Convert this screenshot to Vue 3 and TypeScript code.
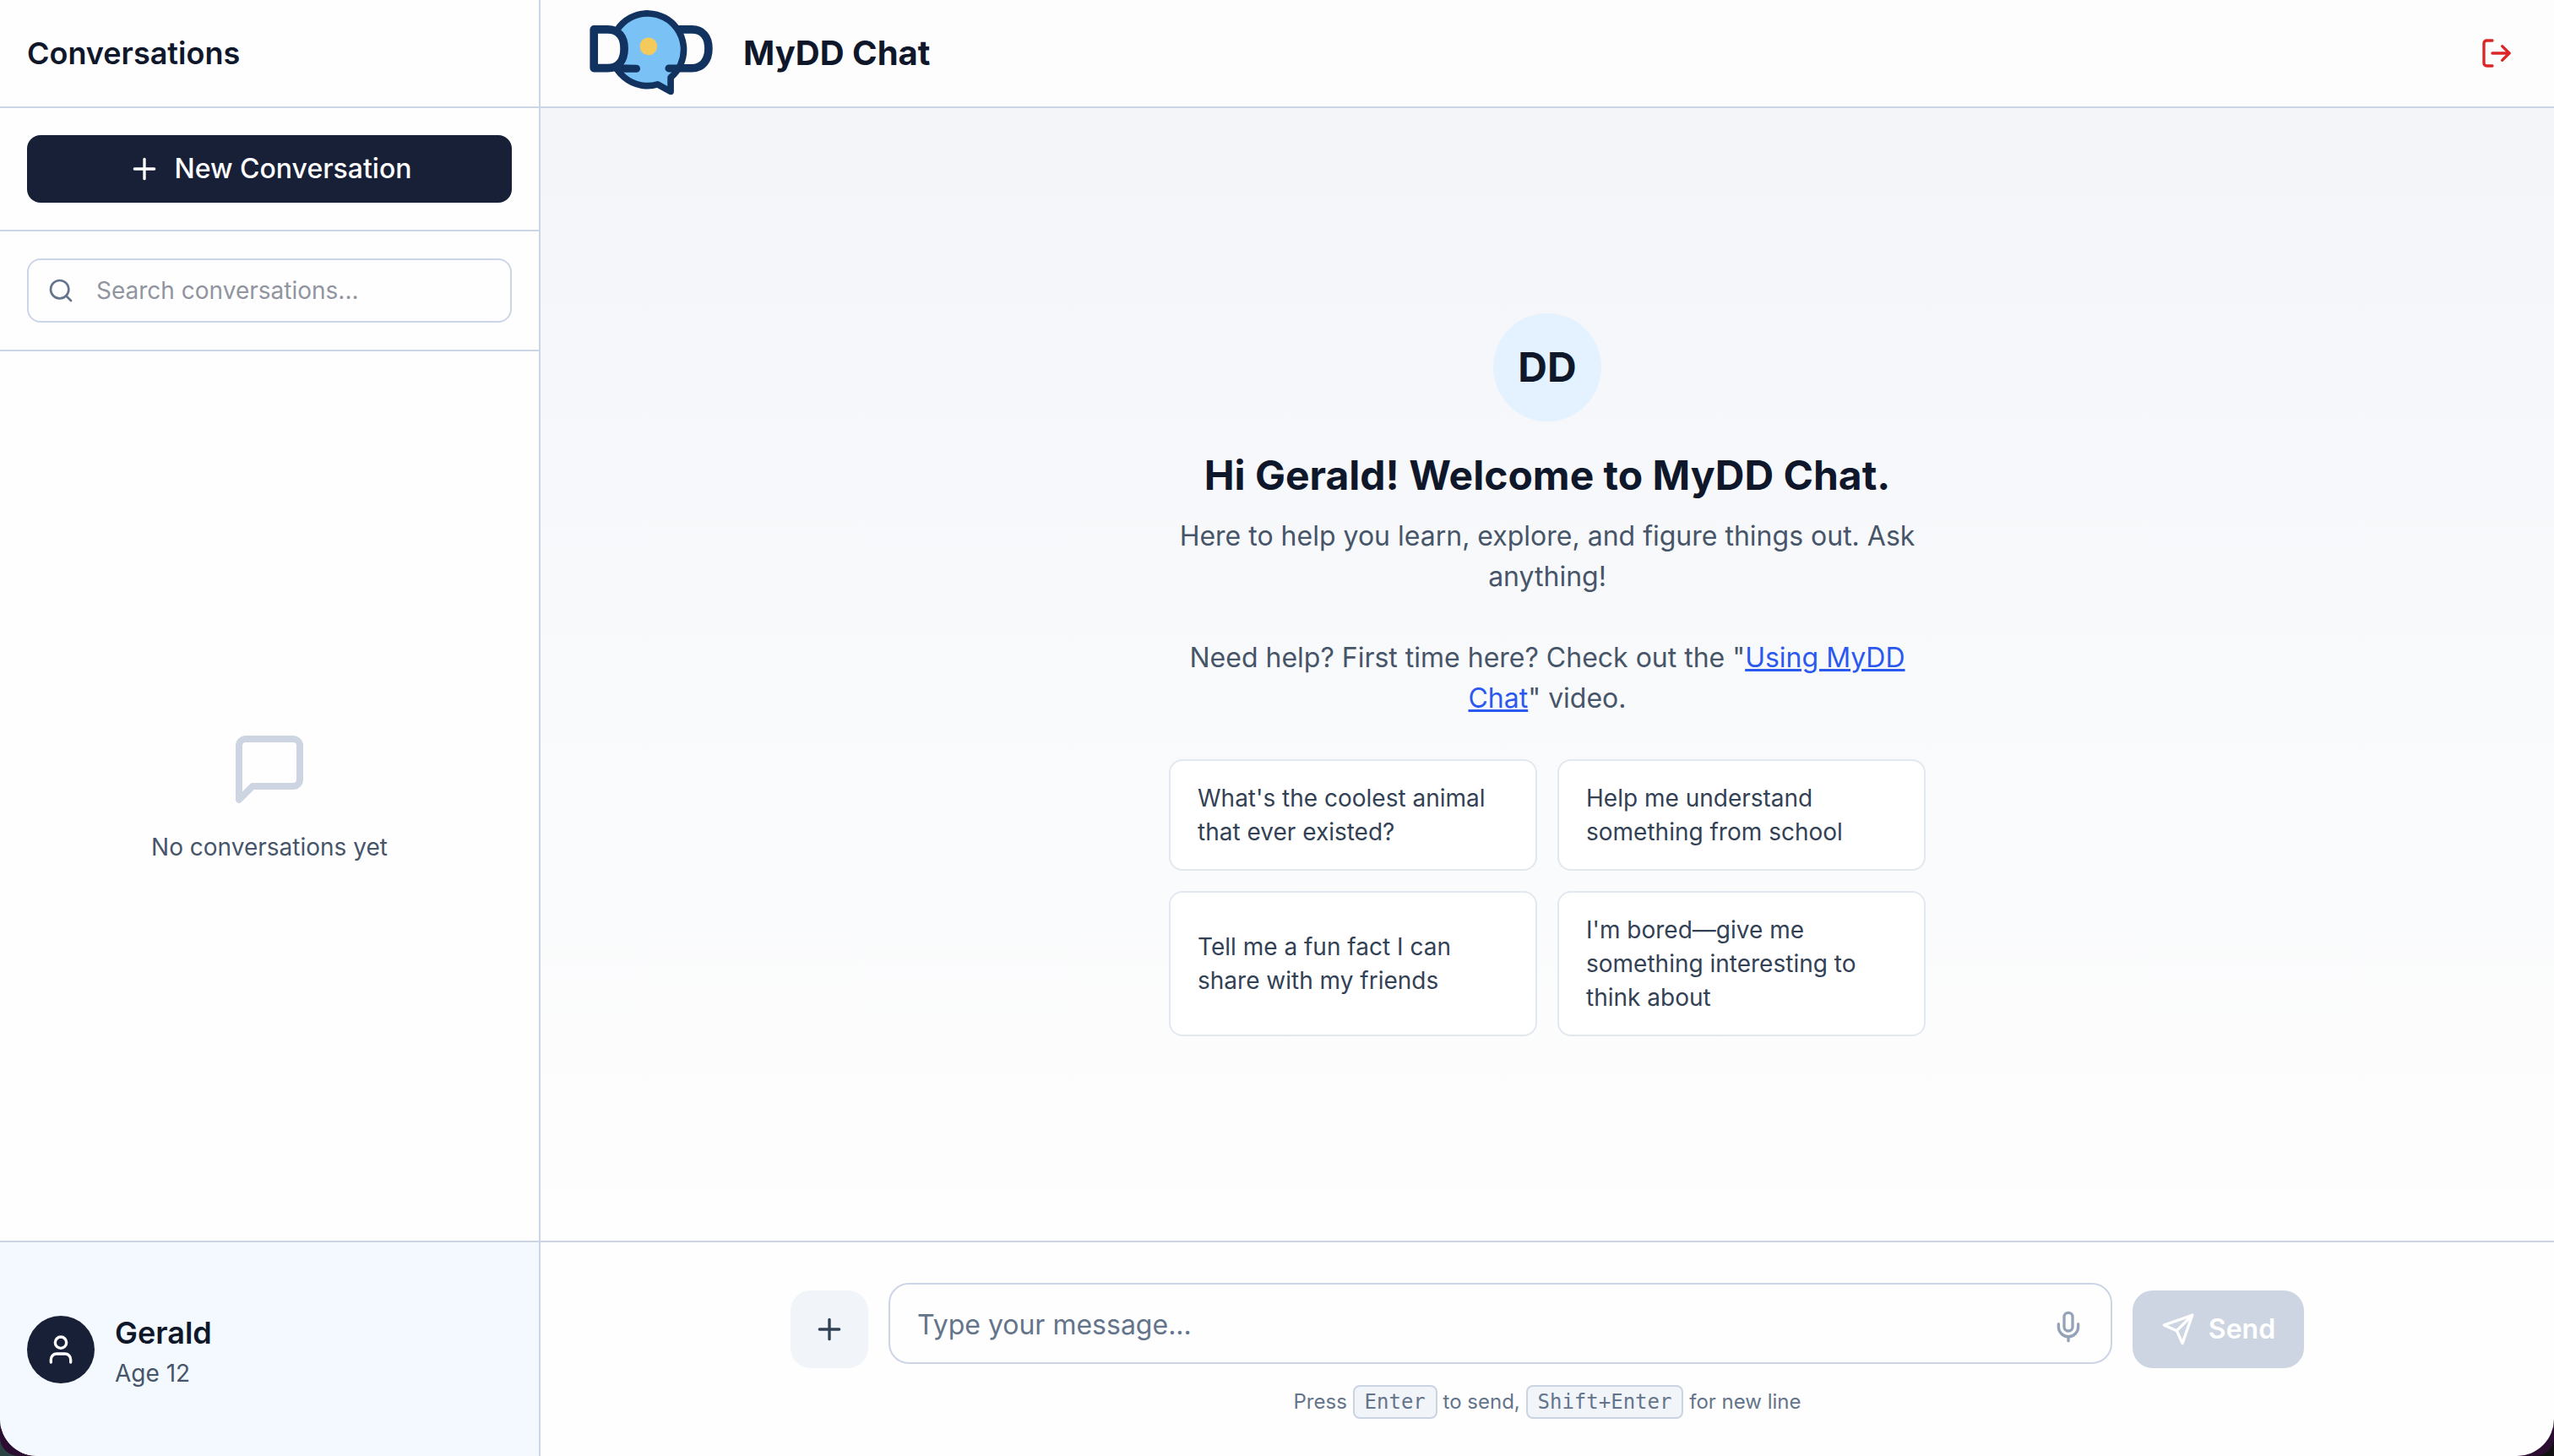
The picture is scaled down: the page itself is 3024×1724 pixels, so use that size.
<script setup lang="ts">
import { ref } from 'vue'

const suggestions: string[] = [
  "What's the coolest animal that ever existed?",
  'Help me understand something from school',
  'Tell me a fun fact I can share with my friends',
  "I'm bored—give me something interesting to think about",
]
const search = ref<string>('')
const message = ref<string>('')
</script>

<template>
  <div class="screen">
    <div class="frame">
    <div class="window">
      <aside class="sidebar">
        <header class="side-head"><h2>Conversations</h2></header>
        <div class="side-block">
          <button class="new-btn">
            <svg class="i40" viewBox="0 0 24 24"><path d="M5 12h14M12 5v14" /></svg>
            <span>New Conversation</span>
          </button>
        </div>
        <div class="side-block">
          <label class="search">
            <svg class="i32" viewBox="0 0 24 24"><circle cx="11" cy="11" r="8" /><path d="m21 21-4.3-4.3" /></svg>
            <input v-model="search" type="text" placeholder="Search conversations..." />
          </label>
        </div>
        <div class="empty">
          <svg class="i96" viewBox="0 0 24 24"><path d="M21 15a2 2 0 0 1-2 2H7l-4 4V5a2 2 0 0 1 2-2h14a2 2 0 0 1 2 2z" /></svg>
          <p>No conversations yet</p>
        </div>
        <footer class="profile">
          <div class="avatar">
            <svg class="i40" viewBox="0 0 24 24"><path d="M19 21v-2a4 4 0 0 0-4-4H9a4 4 0 0 0-4 4v2" /><circle cx="12" cy="7" r="4" /></svg>
          </div>
          <div>
            <div class="name">Gerald</div>
            <div class="age">Age 12</div>
          </div>
        </footer>
      </aside>

      <div class="main">
        <header class="top">
          <div class="brand">
            <svg class="logo" viewBox="174 36 438 304">
              <path class="navy" stroke-width="29" d="M456 243H538C576 243 597.500 214 597.500 173C597.500 132 576 105 538 105H480" />
              <path class="bubble" stroke-width="23" d="M416 300.700A129 129 0 1 1 462.500 276V326.500Z" />
              <path class="navy" stroke-width="27" d="M456 243.500H486" />
              <path class="navy" stroke-width="27" d="M268 243Q300 244.500 340.500 244.500" />
              <path class="letter" stroke-width="29" d="M189 105H238C277 105 297 132 297 173C297 214 277 242.500 238 242.500H189Z" />
              <circle cx="383.500" cy="165" r="31" fill="#f4cb5a" />
            </svg>
            <h1>MyDD Chat</h1>
          </div>
          <svg class="i40 logout" viewBox="0 0 24 24"><path d="M9 21H5a2 2 0 0 1-2-2V5a2 2 0 0 1 2-2h4" /><path d="m16 17 5-5-5-5" /><path d="M21 12H9" /></svg>
        </header>

        <section class="welcome">
          <div class="content">
            <div class="badge">DD</div>
            <h2>Hi Gerald! Welcome to MyDD Chat.</h2>
            <p>
              Here to help you learn, explore, and figure things out. Ask anything!<br /><br />
              Need help? First time here? Check out the "<a>Using MyDD Chat</a>" video.
            </p>
            <div class="cards">
              <button v-for="s in suggestions" :key="s" class="card">{{ s }}</button>
            </div>
          </div>
        </section>

        <section class="composer">
          <div class="row">
            <button class="attach"><svg class="i40" viewBox="0 0 24 24"><path d="M5 12h14M12 5v14" /></svg></button>
            <label class="field">
              <input v-model="message" type="text" placeholder="Type your message..." />
              <svg class="i40 mic" viewBox="0 0 24 24"><path d="M12 19v3" /><path d="M19 10v2a7 7 0 0 1-14 0v-2" /><rect x="9" y="2" width="6" height="13" rx="3" /></svg>
            </label>
            <button class="send">
              <svg class="i40" viewBox="0 0 24 24"><path d="m22 2-7 20-4-9-9-4Z" /><path d="M22 2 11 13" /></svg>
              <span>Send</span>
            </button>
          </div>
          <p class="hint">Press <kbd>Enter</kbd> to send, <kbd>Shift+Enter</kbd> for new line</p>
        </section>
      </div>
    </div>
    </div>
  </div>
</template>

<style>
body {
  margin: 0;
}
</style>

<style scoped>
* {
  box-sizing: border-box;
}
h1,
h2,
p {
  margin: 0;
}
button,
input {
  font: inherit;
  border: 0;
  padding: 0;
  background: none;
  color: inherit;
}
svg {
  display: block;
  flex: none;
  fill: none;
  stroke: currentColor;
  stroke-width: 2;
  stroke-linecap: round;
  stroke-linejoin: round;
}
.i32 {
  width: 32px;
  height: 32px;
}
.i40 {
  width: 40px;
  height: 40px;
}
.i96 {
  width: 96px;
  height: 96px;
}
.screen {
  width: 3024px;
  height: 1724px;
  overflow: hidden;
  background: linear-gradient(to right, #2a4242 50%, #101010 50%);
  font-family: Inter, "Liberation Sans", sans-serif;
  color: #0f172a;
}
.frame {
  height: 100%;
  overflow: hidden;
  border-radius: 0 0 22px 22px;
  background: #2a0d30;
}
.window {
  display: flex;
  height: 100%;
  overflow: hidden;
  background: #fefefe;
  border-radius: 0 0 44px 44px;
}
.sidebar {
  display: flex;
  flex-direction: column;
  flex: none;
  width: 640px;
  border-right: 2px solid #cbd5e6;
}
.side-head {
  display: flex;
  align-items: center;
  height: 128px;
  padding: 0 32px;
  border-bottom: 2px solid #cbd5e6;
}
.side-head h2 {
  font-size: 36px;
  line-height: 56px;
  font-weight: 600;
}
.side-block {
  padding: 32px;
  border-bottom: 2px solid #cbd5e6;
}
.new-btn {
  display: flex;
  align-items: center;
  justify-content: center;
  gap: 16px;
  width: 100%;
  height: 80px;
  border-radius: 16px;
  background: #182037;
  color: #fff;
  font-size: 32px;
  font-weight: 500;
}
.new-btn span {
  padding-bottom: 2px;
}
.search {
  display: flex;
  align-items: center;
  gap: 26px;
  height: 76px;
  padding: 0 22px;
  border: 2px solid #cbd5e6;
  border-radius: 16px;
  color: #64748b;
}
.search input {
  flex: 1;
  min-width: 0;
  font-size: 28px;
  outline: none;
}
.search input::placeholder {
  color: #9095a0;
}
.empty {
  display: flex;
  flex: 1;
  flex-direction: column;
  align-items: center;
  justify-content: center;
  gap: 24px;
  color: #cdd5e2;
}
.empty p {
  font-size: 28px;
  line-height: 40px;
  color: #475569;
}
.profile {
  display: flex;
  align-items: center;
  gap: 24px;
  height: 255px;
  padding: 0 32px;
  border-top: 2px solid #cbd5e6;
  background: #f4f9ff;
}
.avatar {
  display: flex;
  align-items: center;
  justify-content: center;
  width: 80px;
  height: 80px;
  border-radius: 50%;
  background: #182037;
  color: #fff;
}
.name {
  font-size: 36px;
  line-height: 56px;
  font-weight: 600;
}
.age {
  font-size: 28px;
  line-height: 40px;
  color: #475569;
}
.main {
  display: flex;
  flex: 1;
  flex-direction: column;
  min-width: 0;
}
.top {
  display: flex;
  align-items: center;
  justify-content: space-between;
  height: 128px;
  padding: 0 48px 0 58px;
  border-bottom: 2px solid #cbd5e6;
  background: #fdfdfe;
}
.brand {
  display: flex;
  align-items: center;
  gap: 36px;
}
.logo {
  width: 146px;
  height: 101px;
  margin-bottom: 1px;
}
.navy {
  stroke: #12335f;
}
.bubble {
  stroke: #12335f;
  fill: #7ac2f5;
}
.letter {
  stroke: #12335f;
  fill: #fdfdfe;
}
.logo circle {
  stroke: none;
}
.brand h1 {
  font-size: 40px;
  line-height: 56px;
  font-weight: 700;
}
.logout {
  color: #dc2626;
}
.welcome {
  display: flex;
  flex: 1;
  align-items: center;
  justify-content: center;
  background: linear-gradient(to bottom, #f3f5f9, #fefefe);
}
.content {
  display: flex;
  flex-direction: column;
  align-items: center;
  width: 896px;
  text-align: center;
}
.badge {
  display: flex;
  align-items: center;
  justify-content: center;
  width: 128px;
  height: 128px;
  margin-bottom: 32px;
  border-radius: 50%;
  background: #e3f2fe;
  font-size: 48px;
  font-weight: 700;
}
.content h2 {
  margin-bottom: 16px;
  font-size: 48px;
  line-height: 64px;
  font-weight: 700;
  white-space: nowrap;
}
.content p {
  margin-bottom: 48px;
  font-size: 32px;
  line-height: 48px;
  color: #475569;
}
.content a {
  color: #2b59f0;
  text-decoration: underline;
}
.cards {
  display: grid;
  grid-template-columns: 1fr 1fr;
  gap: 24px;
  width: 100%;
}
.card {
  padding: 24px 32px;
  border: 2px solid #e2e8f0;
  border-radius: 16px;
  background: #fff;
  color: #334155;
  font-size: 28px;
  line-height: 40px;
  text-align: left;
}
.composer {
  display: flex;
  flex-direction: column;
  align-items: center;
  height: 255px;
  padding-top: 48px;
  border-top: 2px solid #cbd5e6;
}
.row {
  display: flex;
  align-items: flex-end;
  gap: 24px;
  width: 1792px;
  height: 101px;
}
.attach {
  display: flex;
  flex: none;
  align-items: center;
  justify-content: center;
  width: 92px;
  height: 92px;
  border-radius: 24px;
  background: #f1f5f9;
  color: #334155;
}
.field {
  display: flex;
  flex: 1;
  align-self: flex-start;
  align-items: center;
  height: 96px;
  padding: 0 30px 0 32px;
  border: 2px solid #cbd5e6;
  border-radius: 24px;
}
.field input {
  flex: 1;
  min-width: 0;
  padding-top: 2px;
  font-size: 32px;
  outline: none;
}
.field input::placeholder {
  color: #64748b;
}
.mic {
  margin-top: 8px;
  color: #94a3b8;
}
.send {
  display: flex;
  flex: none;
  align-items: center;
  justify-content: center;
  gap: 16px;
  width: 203px;
  height: 92px;
  border-radius: 24px;
  background: #cdd5e2;
  color: #fff;
  font-size: 32px;
  font-weight: 600;
}
.send span {
  padding-bottom: 1px;
}
.hint {
  margin-top: 20px;
  font-size: 24px;
  line-height: 40px;
  color: #64748b;
}
kbd {
  display: inline-block;
  height: 40px;
  padding: 0 12px;
  border: 2px solid #cbd5e1;
  border-radius: 8px;
  background: #f1f5f9;
  font-family: "DejaVu Sans Mono", "Liberation Mono", monospace;
  font-size: 24px;
  line-height: 36px;
}
</style>
